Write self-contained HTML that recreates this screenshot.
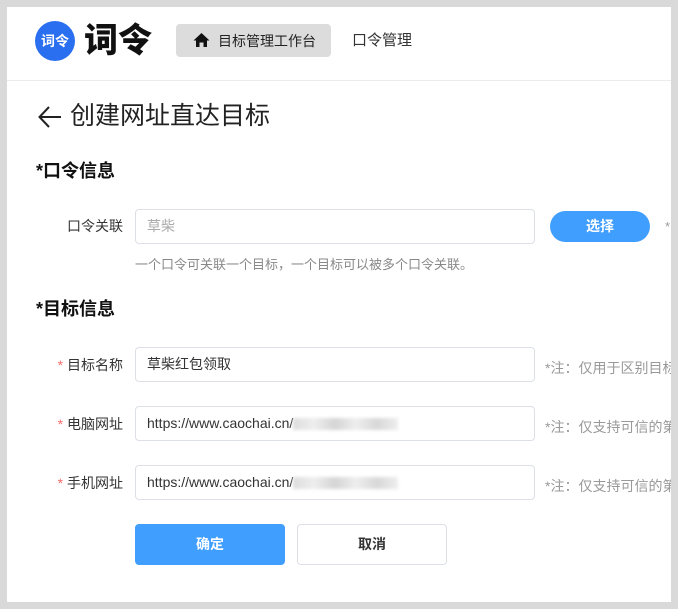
<!DOCTYPE html><html><head><meta charset="utf-8"><style>
body{margin:0;width:678px;height:609px;background:#d9d9d9;font-family:"Liberation Sans","Noto Sans CJK SC",sans-serif;position:relative;overflow:hidden}
.main{position:absolute;left:7px;top:7px;width:664px;height:595px;background:#fff;overflow:hidden}
.a{position:absolute;white-space:nowrap}
.hr{position:absolute;left:7px;top:80px;width:664px;height:1px;background:#ececec}
.inp{position:absolute;left:135px;width:400px;height:34px;border:1px solid #dcdfe6;border-radius:4px;box-sizing:border-box;font-size:14px;color:#333;line-height:32px;padding-left:11px}
.lbl{position:absolute;right:555px;font-size:14px;color:#333}
.note{position:absolute;left:538px;font-size:14px;color:#999;white-space:nowrap}
.blur{display:inline-block;width:105px;height:12px;vertical-align:middle;background:linear-gradient(90deg,#ddd,#eee 20%,#d5d5d5 40%,#eee 60%,#d8d8d8 80%,#eee);filter:blur(1.5px)}
</style></head><body>
<div class="main">
<div class="note" style="top:351px">*注：仅用于区别目标</div>
<div class="note" style="top:410px">*注：仅支持可信的第</div>
<div class="note" style="top:469px">*注：仅支持可信的第</div>
<div class="a" style="left:658px;top:212px;font-size:13px;color:#999">*</div>
</div>
<div class="a" style="left:35px;top:21px;width:40px;height:40px;border-radius:50%;background:#2a6ff0;color:#fff;font-size:14px;font-weight:bold;line-height:40px;text-align:center">词令</div>
<div class="a" style="left:84px;top:19px;font-size:34px;font-weight:900;line-height:44px;color:#111">词令</div>
<div class="a" style="left:176px;top:24px;width:155px;height:33px;background:#dcdcdc;border-radius:4px"></div>
<svg class="a" style="left:193px;top:32px" width="17" height="16" viewBox="0 0 17 16"><path d="M8.5 1 L16.5 8.5 H14 V15 H10.5 V10.5 H6.5 V15 H3 V8.5 H0.5 Z" fill="#111"/></svg>
<div class="a" style="left:218px;top:31px;font-size:14px;color:#222;line-height:20px">目标管理工作台</div>
<div class="a" style="left:352px;top:31px;font-size:15px;color:#333;line-height:20px">口令管理</div>
<div class="hr"></div>
<svg class="a" style="left:38px;top:106px" width="24" height="22" viewBox="0 0 24 22"><path d="M11 1 L1.5 11 L11 21 M1.5 11 H23" fill="none" stroke="#222" stroke-width="2"/></svg>
<div class="a" style="left:70px;top:101px;font-size:25px;color:#222;line-height:30px">创建网址直达目标</div>
<div class="a" style="left:36px;top:160px;font-size:18px;font-weight:bold;color:#111;line-height:22px">*口令信息</div>
<div class="lbl" style="top:216px">口令关联</div>
<div class="inp" style="top:209px;height:35px;color:#aaa">草柴</div>
<div class="a" style="left:550px;top:211px;width:100px;height:31px;border-radius:16px;background:#409eff;color:#fff;font-size:14px;font-weight:bold;line-height:31px;text-align:center">选择</div>
<div class="a" style="left:135px;top:254px;font-size:13px;color:#888">一个口令可关联一个目标，一个目标可以被多个口令关联。</div>
<div class="a" style="left:36px;top:298px;font-size:18px;font-weight:bold;color:#111;line-height:22px">*目标信息</div>
<div class="lbl" style="top:355px"><span style="color:#f56c6c">*</span> 目标名称</div>
<div class="inp" style="top:347px;height:35px">草柴红包领取</div>
<div class="lbl" style="top:414px"><span style="color:#f56c6c">*</span> 电脑网址</div>
<div class="inp" style="top:406px;height:35px">https://www.caochai.cn/<span class="blur"></span></div>
<div class="lbl" style="top:473px"><span style="color:#f56c6c">*</span> 手机网址</div>
<div class="inp" style="top:465px;height:35px">https://www.caochai.cn/<span class="blur"></span></div>
<div class="a" style="left:135px;top:524px;width:150px;height:41px;border-radius:4px;background:#409eff;color:#fff;font-size:14px;font-weight:bold;line-height:41px;text-align:center">确定</div>
<div class="a" style="left:297px;top:524px;width:150px;height:41px;border-radius:4px;border:1px solid #dcdfe6;box-sizing:border-box;color:#333;font-size:14px;font-weight:bold;line-height:39px;text-align:center">取消</div>
</body></html>
